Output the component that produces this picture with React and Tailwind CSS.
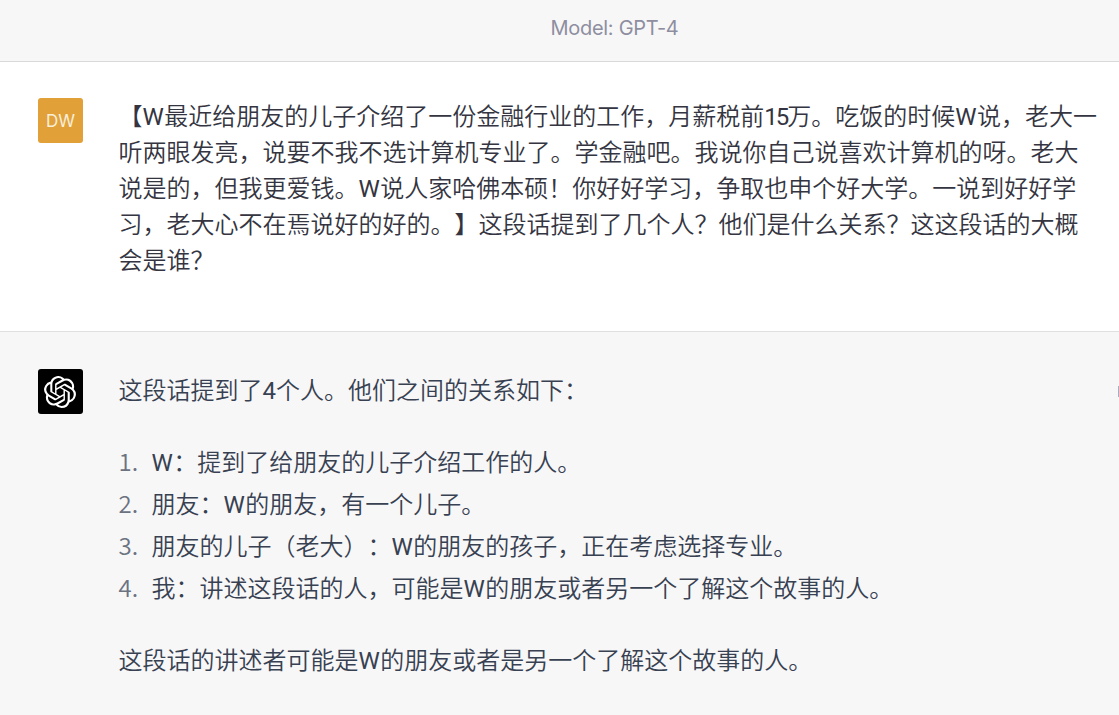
import { SiOpenai } from "react-icons/si";

const relations = [
  "W：提到了给朋友的儿子介绍工作的人。",
  "朋友：W的朋友，有一个儿子。",
  "朋友的儿子（老大）：W的朋友的孩子，正在考虑选择专业。",
  "我：讲述这段话的人，可能是W的朋友或者另一个了解这个故事的人。",
];

const question = [
  "【W最近给朋友的儿子介绍了一份金融行业的工作，月薪税前15万。吃饭的时候W说，老大一",
  "听两眼发亮，说要不我不选计算机专业了。学金融吧。我说你自己说喜欢计算机的呀。老大",
  "说是的，但我更爱钱。W说人家哈佛本硕！你好好学习，争取也申个好大学。一说到好好学",
  "习，老大心不在焉说好的好的。】这段话提到了几个人？他们是什么关系？这这段话的大概",
  "会是谁？",
];

// Latin letters and figures are set a touch heavier than the surrounding Han text.
function Mixed({ text }) {
  return text.split(/(W|\d+)/).map((part, i) => {
    if (part === "W") {
      return (
        <span key={i} className="font-normal tracking-[0.5px]">
          W
        </span>
      );
    }
    if (/^\d\d+$/.test(part)) {
      return (
        <span key={i} className="font-normal tracking-[-2px]">
          {part}
        </span>
      );
    }
    if (/^\d$/.test(part)) {
      return (
        <span key={i} className="font-normal">
          {part}
        </span>
      );
    }
    return part;
  });
}

function Header() {
  return (
    <header className="flex h-[62px] items-start justify-center border-b border-[#d9d9dc] bg-[#f7f7f8] pt-[13px] pl-[110px]">
      <span className="font-['Inter',sans-serif] text-[20px] leading-[30px] [font-weight:430] tracking-[-0.3px] text-[#8e8ea0]">
        Model: GPT-4
      </span>
    </header>
  );
}

function UserMessage() {
  return (
    <section className="flex h-[270px] items-start border-b border-[#e0e0e2] bg-white pl-[38px] pt-9 text-[#343541]">
      <div className="flex size-[45px] shrink-0 items-center justify-center rounded-[3px] bg-[#e2a039] font-['Inter',sans-serif] text-[17px] font-normal text-[#f8efd9]">
        DW
      </div>
      <div className="ml-[35.5px] whitespace-nowrap pt-px">
        {question.map((line) => (
          <p key={line}>
            <Mixed text={line} />
          </p>
        ))}
      </div>
    </section>
  );
}

function AssistantMessage() {
  return (
    <section className="flex flex-1 items-start bg-[#f7f7f8] pl-[38px] pt-[37px] text-[#374151]">
      <div className="flex size-[45px] shrink-0 items-center justify-center rounded-[3px] bg-black pr-px text-white">
        <SiOpenai className="size-8" />
      </div>
      <div className="ml-[35.5px] flex-1 whitespace-nowrap pt-[4px]">
        <p>
          <Mixed text="这段话提到了4个人。他们之间的关系如下：" />
        </p>
        <ol className="my-9 flex flex-col gap-1.5">
          {relations.map((item, i) => (
            <li key={item} className="flex">
              <span className="w-[33px] shrink-0 text-[#6b7280]">
                <span className="font-['Noto_Sans_CJK_SC',sans-serif] leading-none">{i + 1}.</span>
              </span>
              <span>
                <Mixed text={item} />
              </span>
            </li>
          ))}
        </ol>
        <p>
          <Mixed text="这段话的讲述者可能是W的朋友或者是另一个了解这个故事的人。" />
        </p>
      </div>
      <div className="mt-[17px] h-[11px] w-px bg-[#acacbe]" />
    </section>
  );
}

export default function App() {
  return (
    <main className="flex h-[715px] w-[1119px] flex-col overflow-hidden font-['Roboto','Noto_Sans_CJK_SC',sans-serif] text-2xl leading-9 [font-weight:350] [text-spacing-trim:space-all]">
      <Header />
      <UserMessage />
      <AssistantMessage />
    </main>
  );
}
